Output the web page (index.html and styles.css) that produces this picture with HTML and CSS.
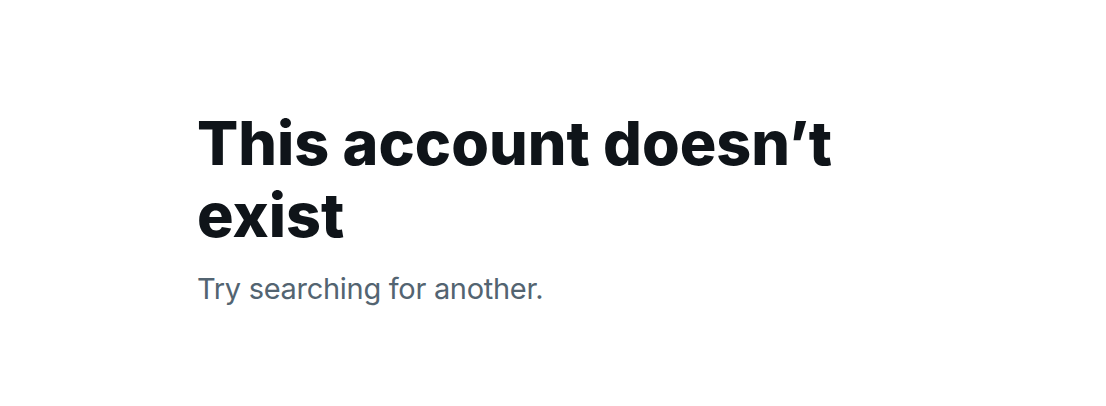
FILE: index.html
```html
<!DOCTYPE html>
<html lang="en">
<head>
<meta charset="utf-8">
<link rel="stylesheet" href="styles.css">
<title>Account</title>
</head>
<body>
<main class="page">
  <section class="empty">
    <h1 class="empty-title">This account doesn’t exist</h1>
    <p class="empty-text">Try searching for another.</p>
  </section>
</main>
</body>
</html>
```
FILE: styles.css
```css
html, body {
  margin: 0;
  padding: 0;
  background: #ffffff;
}
.page {
  padding: 107px 0 0 197px;
}
.empty {
  width: 660px;
  font-family: "Inter", "Noto Sans", sans-serif;
}
.empty-title {
  margin: 0;
  font-size: 61px;
  line-height: 72px;
  font-weight: 800;
  color: #0f1419;
  letter-spacing: 0;
}
.empty-text {
  margin: 18px 0 0;
  font-size: 29px;
  line-height: 40px;
  font-weight: 400;
  color: #536471;
  letter-spacing: -0.3px;
}
```
